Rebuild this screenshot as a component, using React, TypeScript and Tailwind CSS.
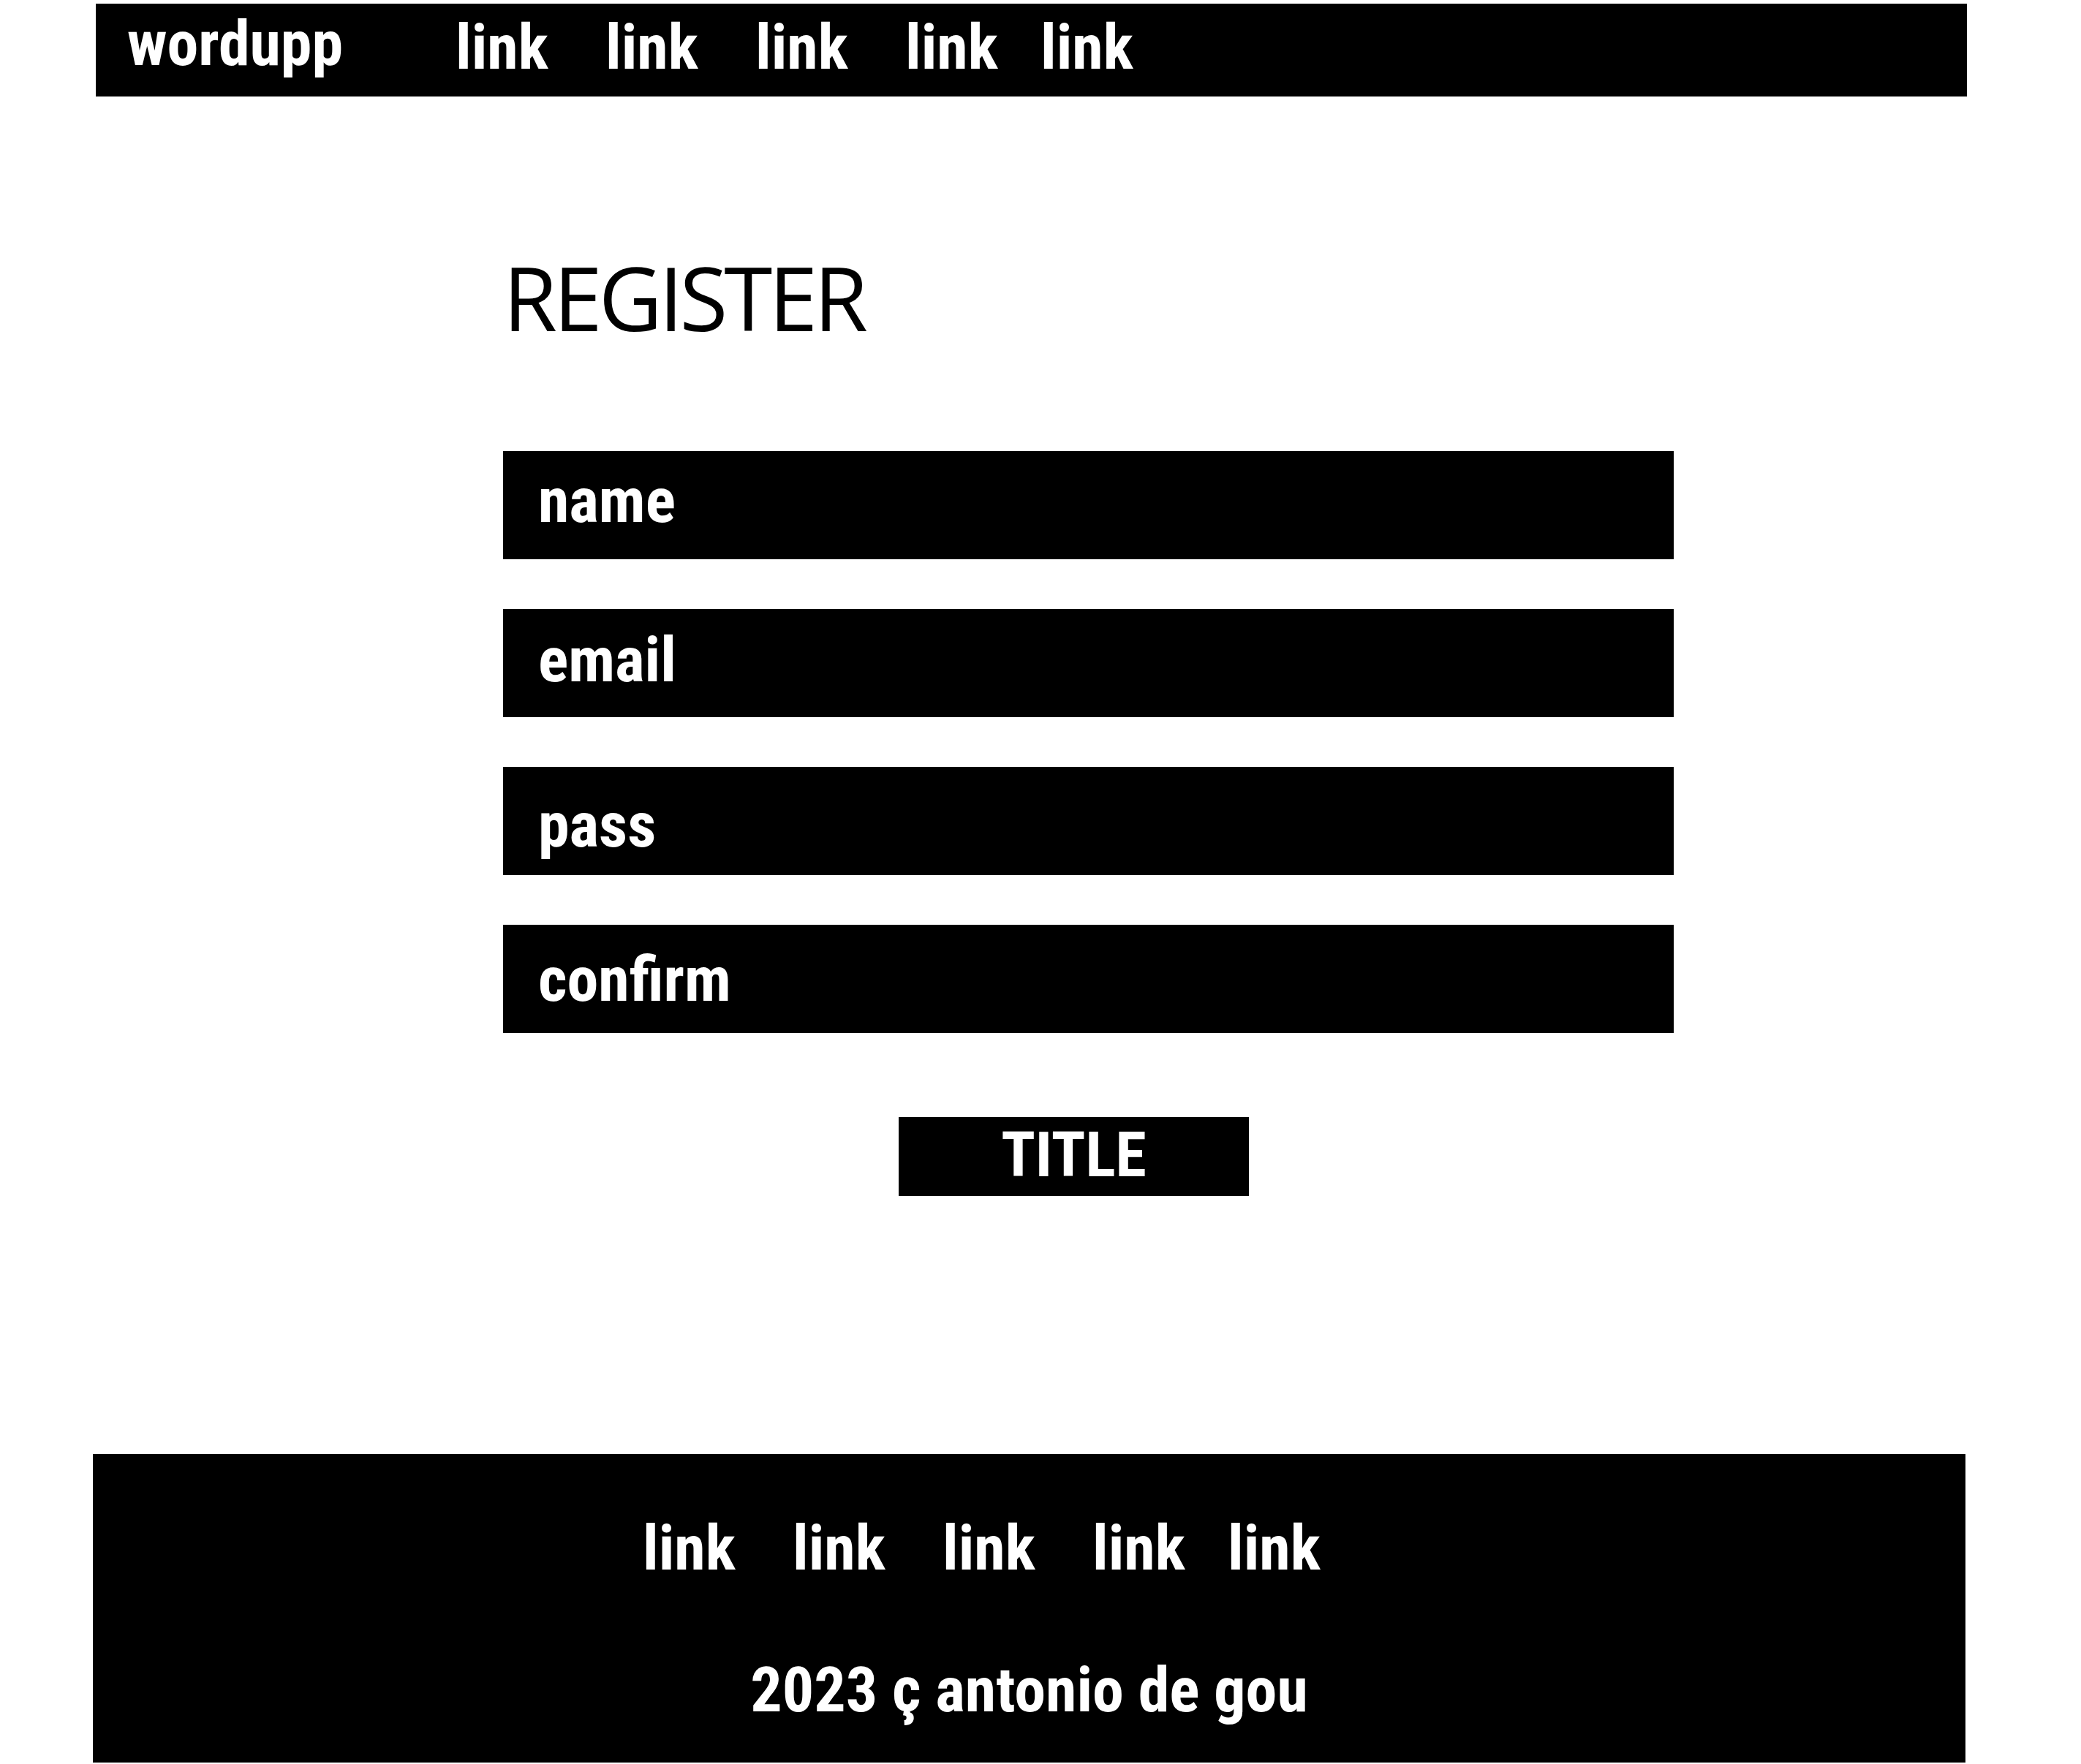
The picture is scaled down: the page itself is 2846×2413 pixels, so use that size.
import React from 'react';

const cond = "[font-family:'Roboto_Condensed','Liberation_Sans_Narrow',Roboto,sans-serif] font-bold text-[86px] leading-none text-white";

const linkBoxes = ['w-[205px]', 'w-[205px]', 'w-[205px]', 'w-[185px]', 'w-auto'];

const fields = [
  { label: 'name', pad: 'pt-[25px]' },
  { label: 'email', pad: 'pt-[27px]' },
  { label: 'pass', pad: 'pt-[37px]' },
  { label: 'confirm', pad: 'pt-[32px]' },
];

const LinkRow: React.FC<{ className?: string }> = ({ className }) => (
  <nav className={`flex items-start ${className ?? ''}`}>
    {linkBoxes.map((w, i) => (
      <a key={i} href="#" className={`${w} shrink-0 ${cond}`}>
        link
      </a>
    ))}
  </nav>
);

export default function App() {
  return (
    <div className="min-h-[2413px] w-full bg-white overflow-hidden">
      {/* Top bar */}
      <header className="ml-[131px] mt-[5px] w-[2559px] h-[127px] bg-black flex items-start pl-[43px]">
        <span className={`w-[449px] shrink-0 mt-[12px] ${cond}`}>wordupp</span>
        <LinkRow className="mt-[17px]" />
      </header>

      {/* Register form */}
      <main className="ml-[688px] w-[1601px]">
        <h1 className="ml-0 mt-[215px] [font-family:'Open_Sans',sans-serif] font-normal text-[120px] leading-none tracking-[-5px] text-black">
          REGISTER
        </h1>

        <div className="mt-[150px] flex flex-col gap-[68px]">
          {fields.map((f) => (
            <div key={f.label} className={`h-[148px] w-full bg-black pl-[48px] ${f.pad}`}>
              <span className={cond}>{f.label}</span>
            </div>
          ))}
        </div>

        <button className={`mt-[115px] ml-[541px] w-[479px] h-[108px] bg-black flex justify-center items-start pt-[9px] ${cond}`}>
          TITLE
        </button>
      </main>

      {/* Footer */}
      <footer className="ml-[127px] mt-[353px] w-[2561px] h-[422px] bg-black pt-[86px]">
        <LinkRow className="pl-[752px]" />
        <p className={`mt-[108px] text-center ${cond}`}>2023 ç antonio de gou</p>
      </footer>
    </div>
  );
}
